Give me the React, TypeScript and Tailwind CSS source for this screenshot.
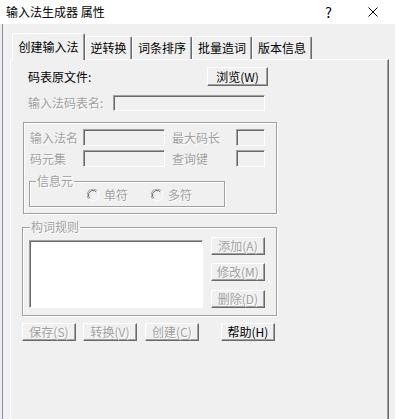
import React from 'react';

const dis = 'text-[#a0a0a0] [text-shadow:1px_1px_0_#ffffff]';
const raised =
  'border border-t-white border-l-white border-r-[#696969] border-b-[#696969] shadow-[inset_-1px_-1px_0_#a0a0a0] bg-[#f0f0f0]';
const sunken =
  'border border-t-[#a0a0a0] border-l-[#a0a0a0] border-r-white border-b-white shadow-[inset_1px_1px_0_#696969]';
const etched = 'border border-[#a0a0a0] shadow-[inset_1px_1px_0_#ffffff,1px_1px_0_#ffffff]';

function Btn({ label, w, h = 'h-[18px]', off }: { label: string; w: string; h?: string; off?: boolean }) {
  return (
    <div className={`flex items-center justify-center ${w} ${h} ${raised} text-[12px] leading-[16px] ${off ? dis : 'text-black'}`}>
      {label}
    </div>
  );
}

function Field({ w, h, white }: { w: string; h: string; white?: boolean }) {
  return <div className={`${w} ${h} ${sunken} ${white ? 'bg-white' : 'bg-[#f0f0f0]'}`} />;
}

function Radio({ label }: { label: string }) {
  return (
    <div className="flex items-center gap-[5px]">
      <svg width="12" height="12" viewBox="0 0 12 12">
        <circle cx="6" cy="6" r="5" fill="#f0f0f0" />
        <path d="M1.8 10.2 A5.5 5.5 0 0 1 10.2 1.8" stroke="#a0a0a0" fill="none" strokeWidth="1" />
        <path d="M2.8 9.2 A4.3 4.3 0 0 1 9.2 2.8" stroke="#696969" fill="none" strokeWidth="1" />
        <path d="M10.2 1.8 A5.5 5.5 0 0 1 1.8 10.2" stroke="#ffffff" fill="none" strokeWidth="1" />
      </svg>
      <span className={`text-[12px] leading-[16px] ${dis}`}>{label}</span>
    </div>
  );
}

const tabs = [
  { label: '逆转换', w: 'w-[47px]' },
  { label: '词条排序', w: 'w-[60px]' },
  { label: '批量造词', w: 'w-[60px]' },
  { label: '版本信息', w: 'w-[60px]' },
];

export default function App() {
  return (
    <div className="w-[395px] h-[419px] overflow-hidden bg-[#f0f0f0] flex flex-col font-['Noto_Sans_CJK_SC','Noto_Sans',sans-serif] text-[12px] text-black">
      {/* title bar */}
      <div className="h-[24px] bg-white flex items-center shrink-0">
        <span className="pl-[6px] flex-1 leading-[16px]">输入法生成器 属性</span>
        <span className="text-[14px] leading-[16px] mr-[36px]">?</span>
        <svg width="10" height="10" viewBox="0 0 10 10" className="mr-[17px]">
          <path d="M0.5 0.5 L9.5 9.5 M9.5 0.5 L0.5 9.5" stroke="#000" strokeWidth="1" />
        </svg>
      </div>

      <div className="flex-1 flex">
        <div className="w-[3px] border-r border-r-[#8a96a6] bg-[#ececec]" />
        <div className="flex-1 flex flex-col">
          {/* tabs */}
          <div className="mt-[9px] ml-[9px] h-[26px] flex items-end relative z-10">
            <div className="w-[73px] h-[27px] -mb-[1px] flex items-center justify-center bg-[#f0f0f0] rounded-t-[2px] border-l border-t border-r border-l-white border-t-white border-r-[#696969] shadow-[inset_-1px_0_0_#a0a0a0] leading-[16px]">
              创建输入法
            </div>
            {tabs.map(t => (
              <div
                key={t.label}
                className={`${t.w} h-[23px] flex items-center justify-center rounded-t-[2px] border-l border-t border-r border-l-white border-t-white border-r-[#696969] shadow-[inset_-1px_0_0_#a0a0a0] leading-[16px]`}
              >
                {t.label}
              </div>
            ))}
          </div>

          {/* panel */}
          <div className="ml-[7px] w-[379px] flex-1 flex flex-col pl-[11px] border-l border-t border-r border-l-white border-t-white border-r-[#696969] shadow-[inset_-1px_0_0_#a0a0a0]">
            <div className="mt-[7px] h-[19px] flex items-center">
              <span className="w-[185px] pl-[6px] leading-[16px]">码表原文件:</span>
              <Btn label="浏览(W)" w="w-[61px]" h="h-[19px]" />
            </div>

            <div className="mt-[9px] h-[16px] flex items-center">
              <span className={`w-[91px] pl-[6px] leading-[16px] ${dis}`}>输入法码表名:</span>
              <Field w="w-[152px]" h="h-[16px]" />
            </div>

            {/* group 1 */}
            <div className={`mt-[11px] ml-[1px] w-[254px] h-[92px] flex flex-col ${etched}`}>
              <div className="mt-[6px] h-[17px] flex items-center">
                <span className={`w-[59px] pl-[6px] leading-[16px] ${dis}`}>输入法名</span>
                <Field w="w-[82px]" h="h-[17px]" />
                <span className={`w-[71px] pl-[7px] leading-[16px] ${dis}`}>最大码长</span>
                <Field w="w-[29px]" h="h-[17px]" />
              </div>
              <div className="mt-[4px] h-[17px] flex items-center">
                <span className={`w-[59px] pl-[6px] leading-[16px] ${dis}`}>码元集</span>
                <Field w="w-[82px]" h="h-[17px]" />
                <span className={`w-[71px] pl-[7px] leading-[16px] ${dis}`}>查询键</span>
                <Field w="w-[29px]" h="h-[17px]" />
              </div>
              <div className={`relative mt-[14px] ml-[5px] w-[196px] h-[26px] ${etched}`}>
                <span className={`absolute left-[6px] -top-[9px] px-[1px] bg-[#f0f0f0] leading-[16px] ${dis}`}>信息元</span>
                <div className="h-full flex items-center pl-[57px] pt-[1px]">
                  <Radio label="单符" />
                  <div className="ml-[23px]">
                    <Radio label="多符" />
                  </div>
                </div>
              </div>
            </div>

            {/* group 2 */}
            <div className={`relative mt-[13px] w-[255px] h-[89px] flex ${etched}`}>
              <span className={`absolute left-[7px] -top-[9px] px-[1px] bg-[#f0f0f0] leading-[16px] ${dis}`}>构词规则</span>
              <div className="ml-[6px] mt-[12px]">
                <Field w="w-[174px]" h="h-[68px]" white />
              </div>
              <div className="ml-[8px] mt-[9px] flex flex-col">
                <Btn label="添加(A)" w="w-[54px]" off />
                <div className="mt-[8px]">
                  <Btn label="修改(M)" w="w-[54px]" off />
                </div>
                <div className="mt-[9px]">
                  <Btn label="删除(D)" w="w-[54px]" off />
                </div>
              </div>
            </div>

            {/* bottom buttons */}
            <div className="mt-[7px] flex">
              <Btn label="保存(S)" w="w-[54px]" off />
              <div className="ml-[7px]">
                <Btn label="转换(V)" w="w-[54px]" off />
              </div>
              <div className="ml-[8px]">
                <Btn label="创建(C)" w="w-[54px]" off />
              </div>
              <div className="ml-[22px]">
                <Btn label="帮助(H)" w="w-[54px]" />
              </div>
            </div>
          </div>
        </div>
      </div>
    </div>
  );
}
